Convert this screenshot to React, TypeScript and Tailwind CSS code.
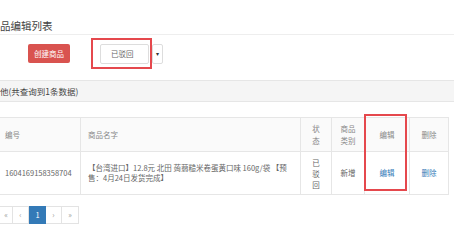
import React from 'react';

const font = { fontFamily: '"Noto Sans CJK SC", "Noto Sans", sans-serif' };

export default function App() {
  return (
    <div className="relative w-[454px] h-[248px] overflow-hidden bg-white text-[#555]" style={font}>
      {/* Title */}
      <div className="h-[35px] border-b border-[#eee] flex items-end pb-[3px]">
        <span className="text-[10.5px] leading-[11px] text-[#444]">品编辑列表</span>
      </div>

      {/* Toolbar */}
      <div className="h-[45px] flex items-start pt-[9px]">
        <button className="ml-[28px] w-[42px] h-[19px] rounded-[2px] bg-[#d9534f] text-white text-[7.5px] leading-[19px] text-center">
          创建商品
        </button>
        <div className="ml-[30px] flex">
          <div className="w-[49px] h-[20px] border border-[#ddd] rounded-[2px] text-[7.5px] leading-[18px] text-[#666] pl-[10px]">
            已驳回
          </div>
          <div className="ml-[3px] w-[11px] h-[20px] border border-[#ddd] rounded-[2px] text-[6px] leading-[18px] text-center text-[#333]">
            ▾
          </div>
        </div>
      </div>

      {/* Panel heading */}
      <div className="h-[22px] border-t border-b border-[#e6e6e6] bg-[#f5f5f5] flex items-center">
        <span className="text-[8.5px] text-[#444]">他(共查询到1条数据)</span>
      </div>

      {/* Table */}
      <div className="mt-[15px] w-[449px] border-t border-[#e6e6e6]">
        <div className="flex h-[34px] bg-[#fafafa] border-b border-[#e6e6e6] text-[7.5px] text-[#888]">
          <div className="w-[80px] flex items-center pl-[5px]">编号</div>
          <div className="w-[220px] flex items-center pl-[7px] border-l border-[#e6e6e6]">商品名字</div>
          <div className="w-[31px] flex items-center justify-center text-center leading-[12px] border-l border-[#e6e6e6]">
            状<br />态
          </div>
          <div className="w-[33px] flex items-center justify-center text-center leading-[12px] border-l border-[#e6e6e6]">
            商品<br />类别
          </div>
          <div className="w-[45px] flex items-center justify-center border-l border-[#e6e6e6]">编辑</div>
          <div className="w-[40px] flex items-center justify-center border-l border-r border-[#e6e6e6]">删除</div>
        </div>
        <div className="flex h-[43px] border-b border-[#e6e6e6] text-[7.5px] text-[#666]">
          <div className="w-[80px] flex items-center pl-[5px]">1604169158358704</div>
          <div className="w-[220px] flex items-center pl-[7px] pr-[10px] leading-[10px] border-l border-[#e6e6e6]">
            【台湾进口】12.8元 北田 蒟蒻糙米卷蛋黄口味 160g/袋 【预售：4月24日发货完成】
          </div>
          <div className="w-[31px] flex items-center justify-center text-center leading-[11px] border-l border-[#e6e6e6]">
            已<br />驳<br />回
          </div>
          <div className="w-[33px] flex items-center justify-center border-l border-[#e6e6e6]">新增</div>
          <div className="w-[45px] flex items-center justify-center border-l border-[#e6e6e6] text-[#337ab7]">编辑</div>
          <div className="w-[40px] flex items-center justify-center border-l border-r border-[#e6e6e6] text-[#337ab7]">删除</div>
        </div>
      </div>

      {/* Pagination */}
      <div className="mt-[11px] flex text-[7.5px] text-[#999]">
        <div className="w-[13px] h-[18px] border border-[#e3e3e3] border-l-0 flex items-center justify-center">«</div>
        <div className="w-[16px] h-[18px] border border-[#e3e3e3] border-l-0 flex items-center justify-center">‹</div>
        <div className="w-[17px] h-[18px] bg-[#337ab7] text-white flex items-center justify-center">1</div>
        <div className="w-[16px] h-[18px] border border-[#e3e3e3] border-l-0 flex items-center justify-center">›</div>
        <div className="w-[17px] h-[18px] border border-[#e3e3e3] border-l-0 flex items-center justify-center">»</div>
      </div>

      {/* Annotations */}
      <div className="absolute left-[91px] top-[38px] w-[61px] h-[31px] border-2 border-[#e5484d]" />
      <div className="absolute left-[364px] top-[114px] w-[43px] h-[77px] border-2 border-[#e5484d]" />
    </div>
  );
}
